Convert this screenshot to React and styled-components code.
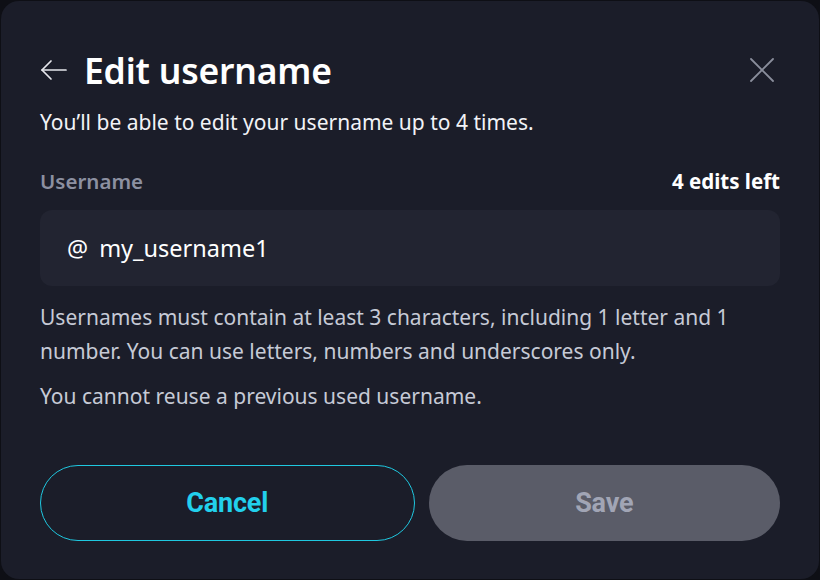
import React from 'react';
import styled, { createGlobalStyle } from 'styled-components';

const GlobalStyle = createGlobalStyle`
  html, body {
    margin: 0;
    padding: 0;
    background: #0e0f15;
  }
  * {
    box-sizing: border-box;
  }
`;

const BackIcon = () => (
  <svg width="28" height="28" viewBox="0 0 28 28" fill="none" stroke="#e6e7ec" strokeWidth="1.7" strokeLinecap="round" strokeLinejoin="round">
    <path d="M26 14H2" />
    <path d="M11 5l-9 9 9 9" />
  </svg>
);

const CloseIcon = () => (
  <svg width="24" height="24" viewBox="0 0 24 24" fill="none" stroke="#8a8e9c" strokeWidth="1.8" strokeLinecap="round">
    <path d="M1 1l22 22" />
    <path d="M23 1L1 23" />
  </svg>
);

const EditUsernameDialog = () => {
  return (
    <Card>
      <Header>
        <TitleGroup>
          <IconButton aria-label="Back">
            <BackIcon />
          </IconButton>
          <Title>Edit username</Title>
        </TitleGroup>
        <IconButton aria-label="Close" $inset>
          <CloseIcon />
        </IconButton>
      </Header>

      <Subtitle>You’ll be able to edit your username up to 4 times.</Subtitle>

      <LabelRow>
        <Label>Username</Label>
        <EditsLeft>4 edits left</EditsLeft>
      </LabelRow>

      <InputBox>
        <At>@</At>
        <Input defaultValue="my_username1" />
      </InputBox>

      <Help>
        Usernames must contain at least 3 characters, including 1 letter and 1 number. You can use
        letters, numbers and underscores only.
      </Help>
      <Help $spaced>You cannot reuse a previous used username.</Help>

      <Actions>
        <Button $variant="outline">Cancel</Button>
        <Button $variant="disabled" disabled>Save</Button>
      </Actions>
    </Card>
  );
};

export default function App() {
  return (
    <>
      <GlobalStyle />
      <Page>
        <EditUsernameDialog />
      </Page>
    </>
  );
}

// Styled components
const Page = styled.div`
  width: 820px;
  height: 580px;
  padding: 1px;
`;

const Card = styled.div`
  height: 100%;
  background: #1b1d29;
  border-radius: 18px;
  padding: 47px 39px 38px;
  display: flex;
  flex-direction: column;
  font-family: 'Noto Sans', 'Open Sans', sans-serif;
  color: #f2f3f7;
`;

const Header = styled.div`
  display: flex;
  align-items: center;
  justify-content: space-between;
  height: 44px;
`;

const TitleGroup = styled.div`
  display: flex;
  align-items: center;
  gap: 16px;
`;

const IconButton = styled.button`
  display: flex;
  align-items: center;
  justify-content: center;
  background: none;
  border: none;
  padding: 0;
  margin-right: ${(p) => (p.$inset ? '6px' : '0')};
  cursor: pointer;
`;

const Title = styled.h1`
  margin: 0;
  font-size: 35.5px;
  font-weight: 600;
  letter-spacing: -0.2px;
  color: #ffffff;
  line-height: 44px;
`;

const Subtitle = styled.p`
  margin: 17px 0 0;
  font-size: 21px;
  line-height: 26px;
  color: #f2f3f7;
`;

const LabelRow = styled.div`
  display: flex;
  justify-content: space-between;
  align-items: center;
  margin-top: 33px;
  line-height: 26px;
  font-size: 20.5px;
  font-weight: 600;
`;

const Label = styled.span`
  color: #8c90a1;
`;

const EditsLeft = styled.span`
  color: #ffffff;
  font-weight: 700;
`;

const InputBox = styled.div`
  display: flex;
  align-items: center;
  gap: 11px;
  margin-top: 16px;
  height: 76px;
  padding: 0 27px;
  background: #222431;
  border-radius: 12px;
`;

const At = styled.span`
  font-size: 23.5px;
  color: #ffffff;
`;

const Input = styled.input`
  flex: 1;
  background: none;
  border: none;
  outline: none;
  padding: 0;
  font-family: inherit;
  font-size: 23.5px;
  color: #ffffff;
`;

const Help = styled.p`
  margin: ${(p) => (p.$spaced ? '11px' : '14px')} 0 0;
  font-size: 21px;
  line-height: 34px;
  color: #c6cad6;
`;

const Actions = styled.div`
  display: flex;
  gap: 14px;
  margin-top: auto;
`;

const Button = styled.button`
  flex: ${(p) => (p.$variant === 'outline' ? '375' : '351')};
  height: 76px;
  border-radius: 38px;
  font-family: Roboto, 'Liberation Sans', sans-serif;
  font-size: 27px;
  font-weight: 700;
  letter-spacing: -0.2px;
  cursor: pointer;
  border: 1px solid ${(p) => (p.$variant === 'outline' ? '#1fc8e0' : 'transparent')};
  background: ${(p) => (p.$variant === 'outline' ? 'transparent' : '#5a5c68')};
  color: ${(p) => (p.$variant === 'outline' ? '#22d0ec' : '#a1a5b5')};

  &:disabled {
    cursor: default;
  }
`;
